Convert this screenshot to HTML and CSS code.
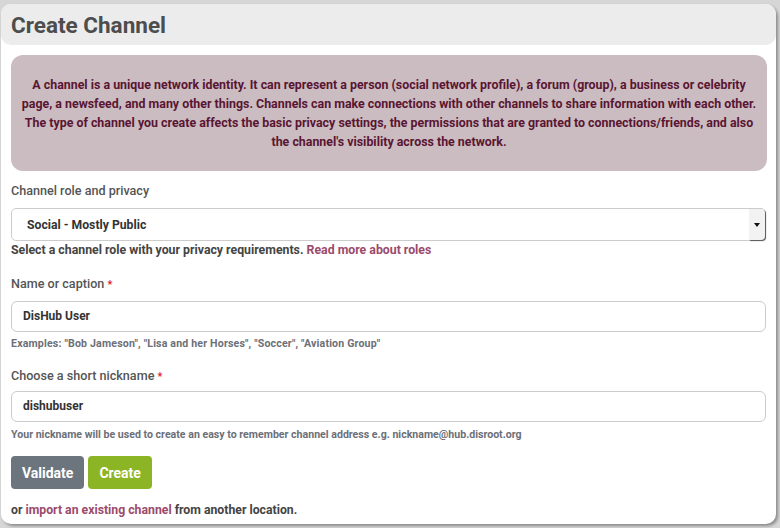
FILE: index.html
```html
<!DOCTYPE html>
<html>
<head>
<meta charset="utf-8">
<link rel="stylesheet" href="styles.css">
</head>
<body>
<div class="card">
  <div class="card-header"><h1>Create Channel</h1></div>
  <div class="card-body">
    <div class="info">A channel is a unique network identity. It can represent a person (social network profile), a forum (group), a business or celebrity page, a newsfeed, and many other things. Channels can make connections with other channels to share information with each other. The type of channel you create affects the basic privacy settings, the permissions that are granted to connections/friends, and also the channel's visibility across the network.</div>

    <div class="group">
      <label class="label">Channel role and privacy</label>
      <div class="select">
        <span class="select-text">Social - Mostly Public</span>
        <span class="select-btn"><span class="arrow"></span></span>
      </div>
      <div class="help-strong">Select a channel role with your privacy requirements. <a href="#">Read more about roles</a></div>
    </div>

    <div class="group group-name">
      <label class="label">Name or caption <span class="req">*</span></label>
      <div class="input">DisHub User</div>
      <div class="hint hint-examples">Examples: "Bob Jameson", "Lisa and her Horses", "Soccer", "Aviation Group"</div>
    </div>

    <div class="group group-nick">
      <label class="label">Choose a short nickname <span class="req">*</span></label>
      <div class="input">dishubuser</div>
      <div class="hint">Your nickname will be used to create an easy to remember channel address e.g. nickname@hub.disroot.org</div>
    </div>

    <div class="buttons">
      <button class="btn btn-gray">Validate</button>
      <button class="btn btn-green">Create</button>
    </div>

    <div class="footer-text">or <a href="#">import an existing channel</a> from another location.</div>
  </div>
</div>
</body>
</html>
```

FILE: styles.css
```css
* { box-sizing: border-box; }
html, body {
  margin: 0;
  padding: 0;
  background: #d6d6d6;
  font-family: Roboto, "Liberation Sans", sans-serif;
}
body { padding: 4px 4px 0 1px; height: 528px; overflow: hidden; }
.card {
  background: #fff;
  border-radius: 10px;
  box-shadow: 2px 2px 3px rgba(0,0,0,0.35);
  width: 775px;
  height: 520px;
}
.card-header {
  background: #ececec;
  border-radius: 10px;
  height: 41px;
  display: flex;
  align-items: center;
  padding-left: 10px;
}
.card-header h1 {
  margin: 0;
  font-size: 22.5px;
  font-weight: 700;
  color: #4d4d4d;
  line-height: 26px;
  padding-top: 1px;
}
.card-body {
  padding: 10px 9px 0 10px;
}
.info {
  background: #cbbcc1;
  border-radius: 12px;
  color: #5a1532;
  font-weight: 700;
  font-size: 12.4px;
  line-height: 19px;
  text-align: center;
  padding: 20px 6px 20px 6px;
  margin-bottom: 10px;
}
.group { margin-bottom: 15px; }
.label {
  display: block;
  font-size: 12.6px;
  font-weight: 500;
  color: #555;
  line-height: 19px;
  margin-bottom: 8px;
}
.req { color: #e0141e; font-size: 11px; }
.select {
  height: 33px;
  border: 1px solid #ccc;
  border-radius: 5px;
  display: flex;
  align-items: center;
  justify-content: space-between;
  background: #fff;
  margin-right: 1px;
}
.select-text {
  padding-left: 15px;
  font-size: 12.2px;
  font-weight: 700;
  color: #333;
}
.select-btn {
  width: 16px;
  height: 31px;
  background: #f2f2f2;
  border-radius: 0 4px 4px 0;
  box-shadow: 1px 1px 1px #555;
  display: flex;
  align-items: center;
  justify-content: center;
}
.arrow {
  width: 0; height: 0;
  border-left: 3px solid transparent;
  border-right: 3px solid transparent;
  border-top: 4px solid #111;
}
.help-strong {
  font-size: 12.3px;
  font-weight: 700;
  color: #444;
  line-height: 18px;
}
a { color: #9b4a6c; text-decoration: none; }
.input {
  height: 31px;
  border: 1px solid #ccc;
  border-radius: 6px;
  padding-left: 11px;
  padding-bottom: 2px;
  display: flex;
  align-items: center;
  font-size: 12px;
  font-weight: 700;
  color: #333;
  margin-right: 1px;
}
.hint {
  margin-top: 4px;
  font-size: 10.6px;
  font-weight: 700;
  color: #6c6f78;
  line-height: 14px;
}
.hint-examples { letter-spacing: 0.17px; }
.group-name { margin-bottom: 15px; }
.group-name .label { margin-bottom: 7px; }
.group-name .hint { margin-top: 5px; }
.group-nick { margin-bottom: 14px; }
.group-nick .label { margin-bottom: 5px; }
.group-nick .hint { margin-top: 6px; }
.buttons { display: flex; gap: 4px; margin-bottom: 11px; }
.btn {
  border: none;
  border-radius: 4px;
  height: 33px;
  padding: 0 11px;
  color: #fff;
  font-family: Roboto, "Liberation Sans", sans-serif;
  font-size: 14px;
  font-weight: 700;
}
.btn-gray { background: #6c757d; }
.btn-green { background: #8cb526; }
.footer-text {
  font-size: 12.25px;
  font-weight: 700;
  color: #444;
  line-height: 18px;
  padding-top: 1px;
}
```
